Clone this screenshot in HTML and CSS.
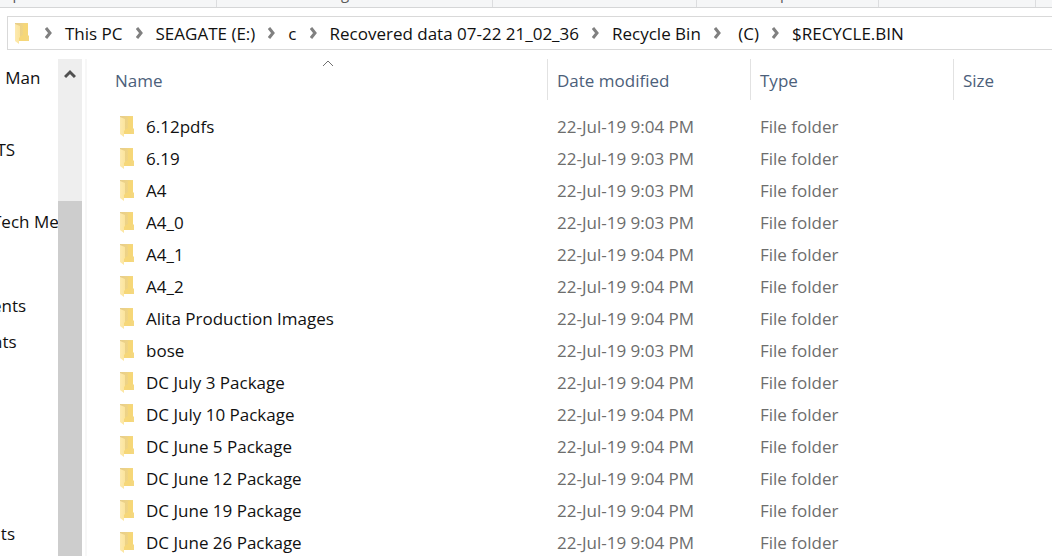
FILE: index.html
```
<!DOCTYPE html>
<html lang="en">
<head>
<meta charset="UTF-8" />
<meta name="viewport" content="width=device-width, initial-scale=1" />
<title>$RECYCLE.BIN</title>
<link rel="stylesheet" href="styles.css">
</head>
<body>

<svg class="defs" aria-hidden="true">
  <linearGradient id="folderBack" x1="0" x2="1" y1="0" y2="0">
    <stop offset="0" stop-color="#e6cd8c" />
    <stop offset="1" stop-color="#f6d97e" />
  </linearGradient>
  <linearGradient id="folderFront" x1="0" x2="1" y1="0" y2="0">
    <stop offset="0" stop-color="#fdeab0" />
    <stop offset="1" stop-color="#fbe49c" />
  </linearGradient>
  <symbol id="folder" viewBox="0 0 14 21">
    <path d="M0 0H13V12L14 13V18H0Z" fill="url(#folderBack)" />
    <path d="M8 1H13V12L11 13V18H4V14L8 12Z" fill="#f6d778" />
    <path d="M0 1L5 3V14L4 15V21L0 18Z" fill="url(#folderFront)" />
  </symbol>
  <symbol id="chevron" viewBox="0 0 7 12">
    <path d="M1 1L5 6L1 11" fill="none" stroke="#808080" stroke-width="3" />
  </symbol>
</svg>

<div class="ribbon">
  <div class="ribbon-group clipboard">Clipboard</div>
  <div class="ribbon-group organize">Organize</div>
  <div class="ribbon-group new">New</div>
  <div class="ribbon-group open">Open</div>
  <div class="ribbon-group select">Select</div>
</div>

<nav class="address" aria-label="Address">
  <svg class="folder"><use href="#folder" /></svg>
  <svg class="chevron"><use href="#chevron" /></svg>
  <a href="#">This PC</a>
  <svg class="chevron"><use href="#chevron" /></svg>
  <a href="#">SEAGATE (E:)</a>
  <svg class="chevron"><use href="#chevron" /></svg>
  <a href="#">c</a>
  <svg class="chevron"><use href="#chevron" /></svg>
  <a href="#">Recovered data 07-22 21_02_36</a>
  <svg class="chevron"><use href="#chevron" /></svg>
  <a href="#">Recycle Bin</a>
  <svg class="chevron"><use href="#chevron" /></svg>
  <a href="#">&nbsp;(C)</a>
  <svg class="chevron"><use href="#chevron" /></svg>
  <a href="#">$RECYCLE.BIN</a>
</nav>

<div class="explorer">
  <aside class="tree">
    <ul>
      <li>&nbsp;&nbsp;&nbsp;Man</li>
      <li></li>
      <li>&nbsp;TS</li>
      <li></li>
      <li>Tech Me</li>
      <li></li>
    </ul>
    <ul>
      <li>ents</li>
      <li>nts</li>
      <li></li>
      <li></li>
      <li></li>
      <li></li>
    </ul>
    <ul>
      <li>&nbsp;&nbsp;ts</li>
    </ul>
  </aside>

  <div class="scrollbar">
    <button class="scroll-up" aria-label="Scroll up">
      <svg viewBox="0 0 12 10"><path d="M1 8L6 3L11 8" fill="none" stroke="#505050" stroke-width="3" /></svg>
    </button>
    <div class="scroll-thumb"></div>
  </div>

  <main class="files">
    <table>
      <thead>
        <tr>
          <th class="col-name" aria-sort="ascending">
            <button>Name</button>
            <svg class="sort" viewBox="0 0 12 7"><path d="M1 6L6 1L11 6" fill="none" stroke="#707070" /></svg>
          </th>
          <th class="col-date"><button>Date modified</button></th>
          <th class="col-type"><button>Type</button></th>
          <th><button>Size</button></th>
        </tr>
      </thead>
      <tbody id="fileRows"></tbody>
    </table>
  </main>
</div>

<script>
  const files = [
    ['6.12pdfs', '9:04'],
    ['6.19', '9:03'],
    ['A4', '9:03'],
    ['A4_0', '9:03'],
    ['A4_1', '9:04'],
    ['A4_2', '9:04'],
    ['Alita Production Images', '9:04'],
    ['bose', '9:03'],
    ['DC July 3 Package', '9:04'],
    ['DC July 10 Package', '9:04'],
    ['DC June 5 Package', '9:04'],
    ['DC June 12 Package', '9:04'],
    ['DC June 19 Package', '9:04'],
    ['DC June 26 Package', '9:04']
  ];

  document.getElementById('fileRows').innerHTML = files.map(([name, time]) => `
    <tr>
      <td><div class="file"><svg class="folder"><use href="#folder" /></svg>${name}</div></td>
      <td>22-Jul-19 ${time} PM</td>
      <td>File folder</td>
      <td></td>
    </tr>
  `).join('');
</script>

</body>
</html>
```
FILE: styles.css
```
* {
  box-sizing: border-box;
}

body {
  margin: 0;
  height: 100vh;
  display: flex;
  flex-direction: column;
  overflow: hidden;
  background: #fff;
  color: #111;
  font-family: "Segoe UI", "Open Sans", sans-serif;
  font-size: 17px;
}

button {
  padding: 0;
  border: 0;
  background: none;
  color: inherit;
  font: inherit;
}

.defs {
  position: absolute;
  width: 0;
  height: 0;
}

.folder {
  width: 14px;
  height: 21px;
  flex-shrink: 0;
}

/* ribbon, scrolled so only its lower edge shows */
.ribbon {
  display: flex;
  align-items: flex-end;
  flex-shrink: 0;
  height: 8px;
  overflow: hidden;
  background: #f5f6f7;
  border-bottom: 1px solid #d5d6d7;
}

.ribbon-group {
  flex-shrink: 0;
  height: 24px;
  border-right: 1px solid #dcdddf;
  color: #5a5a5a;
  font-size: 15px;
  line-height: 20px;
  text-align: center;
}

.clipboard {
  width: 374px;
  margin-left: -157px;
}

.organize { width: 276px; }
.new { width: 204px; }
.open { width: 182px; }
.select { width: 157px; }

.address {
  display: flex;
  align-items: center;
  flex-shrink: 0;
  gap: 13px;
  height: 34px;
  margin: 8px 0 9px 7px;
  padding-left: 7px;
  border: 1px solid #d9d9d9;
  border-right: 0;
  white-space: nowrap;
}

.address a {
  color: inherit;
  text-decoration: none;
}

.address .folder {
  margin-right: 3px;
}

.chevron {
  width: 7px;
  height: 12px;
  flex-shrink: 0;
}

.explorer {
  display: flex;
  flex: 1;
  min-height: 0;
}

.tree {
  width: 58px;
  flex-shrink: 0;
  padding-top: 1px;
  overflow: hidden;
  white-space: nowrap;
}

/* the tree is scrolled sideways, its labels run off the left edge */
.tree ul {
  margin: 0 0 12px -8px;
  padding: 0;
  list-style: none;
}

.tree li {
  height: 36px;
  line-height: 36px;
}

.scrollbar {
  display: flex;
  flex-direction: column;
  flex-shrink: 0;
  width: 24px;
  background: #eee;
}

.scroll-up {
  height: 30px;
}

.scroll-up svg {
  display: block;
  width: 12px;
  height: 10px;
  margin: auto;
}

.scroll-thumb {
  flex: 1;
  margin-top: 112px;
  background: #cdcdcd;
}

.files {
  flex: 1;
  min-width: 0;
  overflow: hidden;
  margin-left: 3px;
  border-left: 2px solid #f7f7f7;
}

.files table {
  width: 100%;
  table-layout: fixed;
  border-collapse: separate;
  border-spacing: 0;
}

.files th {
  position: relative;
  height: 41px;
  padding: 2px 0 0 9px;
  border-left: 1px solid #e2e2e2;
  color: #4c607a;
  font-weight: normal;
  text-align: left;
}

.files .col-name {
  width: 460px;
  padding-left: 28px;
  border-left: 0;
}

.col-date,
.col-type {
  width: 203px;
}

.sort {
  position: absolute;
  top: 1px;
  left: 51%;
  width: 12px;
  height: 7px;
}

.files tbody::before {
  content: "";
  display: block;
  height: 10px;
}

.files td {
  height: 32px;
  padding: 0 0 0 10px;
  color: #6d6d6d;
  white-space: nowrap;
}

.files td:first-child {
  padding-left: 33px;
  color: #111;
}

.file {
  display: flex;
  align-items: center;
  gap: 12px;
}
```
